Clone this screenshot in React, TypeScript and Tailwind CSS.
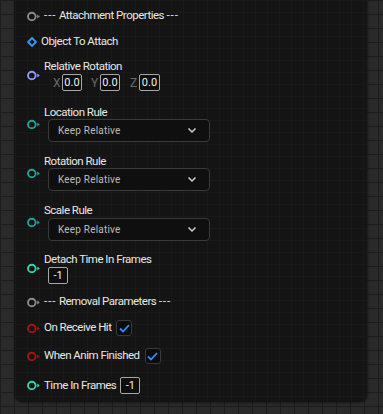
import React from "react";

const Pin = ({ color }: { color: string }) => (
  <svg width="14" height="11" viewBox="0 0 14 11" className="block">
    <circle cx="4.8" cy="5.5" r="3.8" fill="none" stroke={color} strokeWidth="1.9" />
    <path d="M10.2 3.5 L12.8 5.5 L10.2 7.5 Z" fill={color} />
  </svg>
);

const Diamond = () => (
  <svg width="10" height="10" viewBox="0 0 10 10" className="block">
    <path d="M5 1 L9 5 L5 9 L1 5 Z" fill="none" stroke="#2f9bff" strokeWidth="1.8" />
  </svg>
);

const Chevron = () => (
  <svg width="10" height="7" viewBox="0 0 10 7" className="block">
    <path d="M1.5 1.5 L5 5 L8.5 1.5" fill="none" stroke="#d0d0d0" strokeWidth="1.5" />
  </svg>
);

const Check = () => (
  <div className="w-[16px] h-[16px] rounded-[3px] border border-[#3a3a3a] bg-[#0c0c0c] flex items-center justify-center">
    <svg width="11" height="9" viewBox="0 0 11 9">
      <path d="M1 4.5 L4 7.5 L10 1.2" fill="none" stroke="#2f8dff" strokeWidth="1.8" />
    </svg>
  </div>
);

const NumBox = ({ v, w = "w-[20px]" }: { v: string; w?: string }) => (
  <div className={`${w} h-[17px] border border-[#a8a8a8] rounded-[2px] bg-[#0e0e0e] flex items-center justify-center text-[11px] text-[#f0f0f0] leading-none`}>
    {v}
  </div>
);

const Dropdown = () => (
  <div className="ml-[4px] w-[162px] h-[23px] rounded-[4px] border border-[#3a3a3a] bg-[#0f0f0f] flex items-center justify-between pl-[9px] pr-[12px]">
    <span className="text-[10px] text-[#bdbdbd] tracking-[0.2px]">Keep Relative</span>
    <Chevron />
  </div>
);

const PinCol = ({ children }: { children: React.ReactNode }) => (
  <div className="w-[29px] pl-[12px] shrink-0 flex items-center">{children}</div>
);

const T = "text-[11.5px] tracking-[-0.5px] text-[#e8e8e8] leading-none whitespace-nowrap";

const Label = ({ children }: { children: React.ReactNode }) => (
  <div className={`h-[13px] flex items-center ${T}`}>{children}</div>
);

const Dashes = () => <span className="tracking-[1px]">---</span>;

export default function App() {
  const teal = "#1ea596";
  const bright = "#2fd8a6";
  const red = "#a81414";
  const grey = "#8c8c8c";
  return (
    <div
      className="w-[383px] h-[414px] overflow-hidden bg-[#2a2a2a] bg-[linear-gradient(#1c1c1c_1px,transparent_1px),linear-gradient(90deg,#1c1c1c_1px,transparent_1px)] bg-[size:14px_14px] pl-[15px]"
      style={{ fontFamily: "Roboto, 'Noto Sans', sans-serif" }}
    >
      <div className="w-[352px] h-[401px] rounded-b-[7px] bg-[#131413] bg-[linear-gradient(#181918_1px,transparent_1px),linear-gradient(90deg,#181918_1px,transparent_1px)] bg-[size:12px_12px] shadow-[0_1px_3px_rgba(0,0,0,0.8)] flex flex-col">
        <div className="h-[32px] flex items-center">
          <PinCol><Pin color={grey} /></PinCol>
          <span className={T}><Dashes /> Attachment Properties <Dashes /></span>
        </div>
        <div className="h-[20px] flex items-center">
          <div className="w-[26px] pl-[12px] flex items-center"><Diamond /></div>
          <span className={T}>Object To Attach</span>
        </div>
        <div className="mt-[8px] flex items-center">
          <PinCol><Pin color="#8e9cf6" /></PinCol>
          <div className="flex flex-col">
            <div className={`h-[14px] flex items-center ${T}`}>Relative Rotation</div>
            <div className="h-[17px] flex items-center pl-[9px] text-[12px] text-[#6a6a6a]">
              <span className="w-[9px]">X</span>
              <NumBox v="0.0" />
              <span className="w-[9px] ml-[9px]">Y</span>
              <NumBox v="0.0" />
              <span className="w-[9px] ml-[10px]">Z</span>
              <NumBox v="0.0" w="w-[21px]" />
            </div>
          </div>
        </div>
        <div className="mt-[15px] flex items-center">
          <PinCol><Pin color={teal} /></PinCol>
          <div className="flex flex-col">
            <Label>Location Rule</Label>
            <Dropdown />
          </div>
        </div>
        <div className="mt-[13px] flex items-center">
          <PinCol><Pin color={teal} /></PinCol>
          <div className="flex flex-col">
            <Label>Rotation Rule</Label>
            <Dropdown />
          </div>
        </div>
        <div className="mt-[13px] flex items-center">
          <PinCol><Pin color={teal} /></PinCol>
          <div className="flex flex-col">
            <Label>Scale Rule</Label>
            <div className="h-[1px]" />
            <Dropdown />
          </div>
        </div>
        <div className="mt-[12px] flex items-center">
          <PinCol><Pin color={bright} /></PinCol>
          <div className="flex flex-col">
            <Label>Detach Time In Frames</Label>
            <div className="mt-[1px] ml-[4px]"><NumBox v="-1" /></div>
          </div>
        </div>
        <div className="mt-[11px] h-[14px] flex items-center">
          <PinCol><Pin color={grey} /></PinCol>
          <span className={T}><Dashes /> Removal Parameters <Dashes /></span>
        </div>
        <div className="mt-[11px] h-[16px] flex items-center">
          <PinCol><Pin color={red} /></PinCol>
          <span className={`${T} mr-[5px]`}>On Receive Hit</span>
          <Check />
        </div>
        <div className="mt-[12px] h-[16px] flex items-center">
          <PinCol><Pin color={red} /></PinCol>
          <span className={`${T} mr-[5px]`}>When Anim Finished</span>
          <Check />
        </div>
        <div className="mt-[13px] h-[17px] flex items-center">
          <PinCol><Pin color={bright} /></PinCol>
          <span className={`${T} mr-[4px]`}>Time In Frames</span>
          <NumBox v="-1" />
        </div>
      </div>
    </div>
  );
}
